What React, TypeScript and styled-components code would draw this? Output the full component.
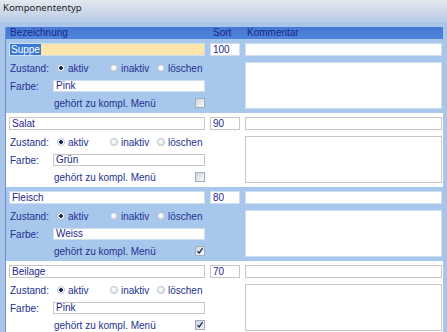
import styled, { createGlobalStyle } from 'styled-components';

//== data ==//
interface Entry {
    name: string,
    sort: string,
    farbe: string,
    menu: boolean,
    selected?: boolean
}

const entries: Entry[] = [
    { name: 'Suppe', sort: '100', farbe: 'Pink', menu: false, selected: true },
    { name: 'Salat', sort: '90', farbe: 'Grün', menu: false },
    { name: 'Fleisch', sort: '80', farbe: 'Weiss', menu: true },
    { name: 'Beilage', sort: '70', farbe: 'Pink', menu: true },
];

//== style ==//
const GlobalStyle = createGlobalStyle`
    html, body {
        margin: 0;
        padding: 0;
    }
    body {
        background: #a9c6ea;
        font-family: "Liberation Sans", Arial, sans-serif;
    }
`;

const Window = styled.div`
    width: 447px;
    height: 332px;
    overflow: hidden;
    background: #a9c6ea;
    display: flex;
    flex-direction: column;
`;

const TitleBar = styled.div`
    flex: none;
    height: 22px;
    padding: 0 3px;
    background: linear-gradient(#e4e9f0, #cad7e8 60%, #b6cbe6);
    font: 9.6px "Noto Sans", sans-serif;
    line-height: 15px;
    color: #1e1e1e;
`;

const Panel = styled.div`
    margin: 5px 4px 0 5px;
    border-left: 1px solid #6b90cb;
    background: #ffffff;
    flex: 1;
`;

const Columns = styled.div`
    display: grid;
    grid-template-columns: 196px 30px 197px;
    column-gap: 5px;
    padding-left: 3px;
`;

const Header = styled(Columns)`
    height: 12px;
    background: linear-gradient(#4478d2, #4f83db);
    font-size: 10px;
    line-height: 12px;
    color: #1b2788;
`;

const HeadCell = styled.span<{ $indent: number }>`
    padding-left: ${p => p.$indent}px;
`;

const Record = styled(Columns)<{ $shaded: boolean }>`
    box-sizing: border-box;
    height: 74px;
    padding-top: 4px;
    grid-template-rows: 13px auto;
    row-gap: 6px;
    background: ${p => p.$shaded ? '#a8c7ed' : '#ffffff'};
    --field-border: ${p => p.$shaded ? '#cfdff2' : '#c6c6c6'};
`;

const Field = styled.div<{ $active?: boolean }>`
    box-sizing: border-box;
    height: 13px;
    border: 1px solid var(--field-border);
    background: ${p => p.$active ? '#fde5ac' : '#ffffff'};
    padding: 0 2px;
    font-size: 10px;
    line-height: 11px;
    color: #26268a;
    white-space: nowrap;
    overflow: hidden;
`;

const Selection = styled.span`
    display: inline-block;
    margin-left: -2px;
    padding: 0 1px;
    background: #3a78d8;
    color: #ffffff;
`;

const Notes = styled.div`
    grid-column: 3;
    box-sizing: border-box;
    height: 47px;
    border: 1px solid var(--field-border);
    background: #ffffff;
`;

const Details = styled.div`
    grid-column: 1;
    display: flex;
    flex-direction: column;
    font-size: 10px;
    color: #24318f;
`;

const Line = styled.div<{ $gap: number }>`
    display: flex;
    align-items: center;
    height: 12px;
    margin-top: ${p => p.$gap}px;
    padding-left: 1px;
`;

const Label = styled.span<{ $width: number }>`
    flex: none;
    width: ${p => p.$width}px;
`;

const Option = styled.span<{ $width?: number }>`
    display: flex;
    align-items: center;
    gap: 3px;
    width: ${p => p.$width ? `${p.$width}px` : 'auto'};
    flex: none;
`;

const Radio = styled.span<{ $checked?: boolean }>`
    box-sizing: border-box;
    width: 8px;
    height: 8px;
    border-radius: 50%;
    border: 1px solid #b7c0cc;
    background: ${p => p.$checked
        ? 'radial-gradient(circle, #1d2a66 0 1.6px, #ffffff 2.2px)'
        : 'radial-gradient(circle at 40% 40%, #ffffff, #d6dde6)'};
`;

const ColorField = styled(Field)`
    width: 152px;
    height: 12px;
    line-height: 10px;
`;

const MenuText = styled.span`
    padding-left: 44px;
`;

const Check = styled.span`
    box-sizing: border-box;
    display: flex;
    align-items: center;
    justify-content: center;
    width: 10px;
    height: 10px;
    margin-left: auto;
    border: 1px solid #a3adb9;
    background: linear-gradient(135deg, #cfd5dd, #f8f9fb);
`;

//== component ==//
const CheckBox = ({ checked }: { checked: boolean }) => (
    <Check>
        {checked && (
            <svg width="8" height="8" viewBox="0 0 8 8">
                <path d="M1.5 4.2 L3.2 6 L6.6 1.2" fill="none" stroke="#1f2a66" strokeWidth="1.3" />
            </svg>
        )}
    </Check>
);

const EntryRow = ({ entry, shaded }: { entry: Entry, shaded: boolean }) => (
    <Record $shaded={shaded}>
        <Field $active={entry.selected}>
            {entry.selected ? <Selection>{entry.name}</Selection> : entry.name}
        </Field>
        <Field>{entry.sort}</Field>
        <Field />
        <Details>
            <Line $gap={0}>
                <Label $width={47}>Zustand:</Label>
                <Option $width={53}><Radio $checked />aktiv</Option>
                <Option $width={47}><Radio />inaktiv</Option>
                <Option><Radio />löschen</Option>
            </Line>
            <Line $gap={6}>
                <Label $width={43}>Farbe:</Label>
                <ColorField>{entry.farbe}</ColorField>
            </Line>
            <Line $gap={5}>
                <MenuText>gehört zu kompl. Menü</MenuText>
                <CheckBox checked={entry.menu} />
            </Line>
        </Details>
        <Notes />
    </Record>
);

export default function App() {
    return (
        <>
            <GlobalStyle />
            <Window>
                <TitleBar>Komponententyp</TitleBar>
                <Panel>
                    <Header>
                        <HeadCell $indent={1}>Bezeichnung</HeadCell>
                        <HeadCell $indent={3}>Sort</HeadCell>
                        <HeadCell $indent={2}>Kommentar</HeadCell>
                    </Header>
                    {entries.map((entry, i) => (
                        <EntryRow key={entry.name} entry={entry} shaded={i % 2 === 0} />
                    ))}
                </Panel>
            </Window>
        </>
    );
}
